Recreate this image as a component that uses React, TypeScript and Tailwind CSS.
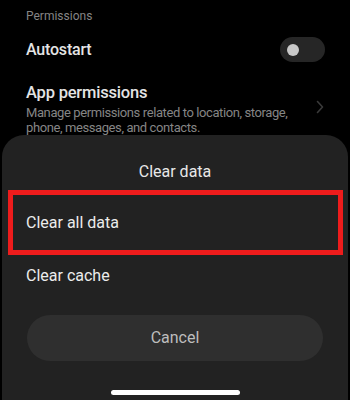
import React from "react";

export default function App() {
  return (
    <div
      className="w-[350px] h-[400px] bg-black overflow-hidden flex flex-col"
      style={{ fontFamily: "Roboto, 'Noto Sans', sans-serif" }}
    >
      <div className="shrink-0 pl-[26px] pt-[8px] text-[12px] leading-[16px] text-[#858585]">Permissions</div>
      <div className="shrink-0 flex items-center justify-between pl-[26px] pr-[25px] mt-[13px] h-[25px]">
        <span className="text-[16px] tracking-[-0.2px] font-medium text-[#e4e4e4]">Autostart</span>
        <div className="w-[45px] h-[25px] rounded-full bg-[#262626] flex items-center pl-[7px]">
          <div className="w-[12px] h-[12px] rounded-full bg-[#c8c8c8]" />
        </div>
      </div>
      <div className="shrink-0 flex items-center justify-between pl-[26px] pr-[26px] mt-[20px]">
        <div className="flex flex-col">
          <span className="text-[16.5px] tracking-[-0.2px] leading-[22px] font-medium text-[#e4e4e4]">App permissions</span>
          <span className="text-[13px] tracking-[-0.4px] leading-[15px] text-[#858585] mt-[1px] w-[272px]">
            Manage permissions related to location, storage, phone, messages, and contacts.
          </span>
        </div>
        <svg width="8" height="14" viewBox="0 0 8 14" className="mb-[4px]">
          <path d="M1.5 1.5 L6.5 7 L1.5 12.5" stroke="#3a3a3a" strokeWidth="1.6" fill="none" strokeLinecap="round" strokeLinejoin="round" />
        </svg>
      </div>
      <div className="mx-[2px] h-[265px] shrink-0 rounded-t-[22px] bg-[#222222] flex flex-col">
        <div className="shrink-0 text-center text-[16px] text-[#e8e8e8] mt-[27px] leading-[20px]">Clear data</div>
        <div className="shrink-0 mt-[8px] ml-[6px] mr-[5px] h-[65px] border-[5px] border-[#ee1c1c] flex items-center pl-[13px]">
          <span className="text-[16px] text-[#ececec]">Clear all data</span>
        </div>
        <div className="shrink-0 pl-[24px] mt-[11px] text-[16px] leading-[20px] text-[#ececec]">Clear cache</div>
        <div className="shrink-0 mx-[25px] mt-[29px] h-[46px] rounded-full bg-[#2f2f2f] flex items-center justify-center text-[16px] text-[#bdbdbd]">
          Cancel
        </div>
        <div className="shrink-0 flex justify-center pt-[29px]">
          <div className="w-[129px] h-[5px] rounded-full bg-white" />
        </div>
      </div>
    </div>
  );
}
